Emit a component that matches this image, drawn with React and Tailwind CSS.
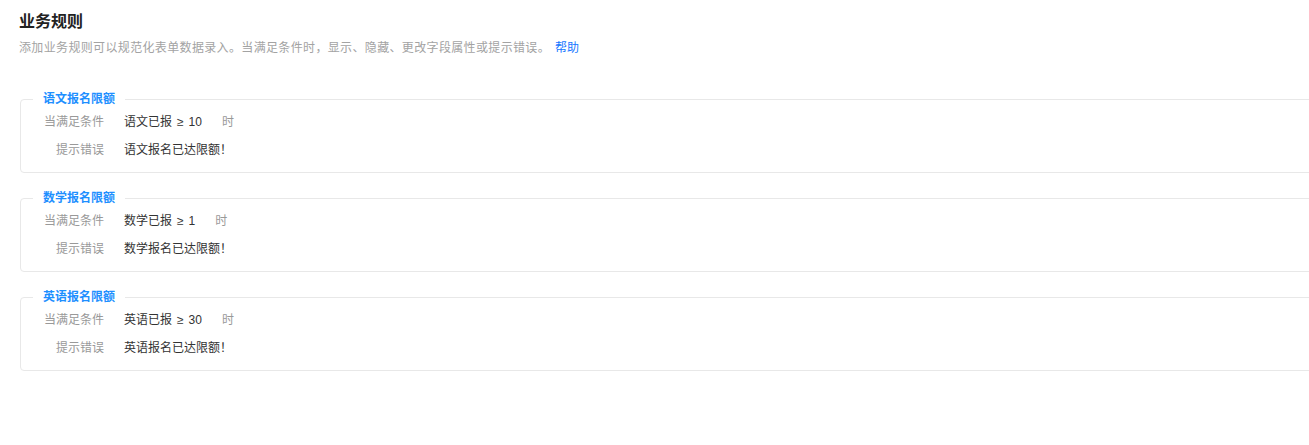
import React from 'react';

const rules = [
    { name: '语文报名限额', field: '语文已报', value: '10', error: '语文报名已达限额！' },
    { name: '数学报名限额', field: '数学已报', value: '1', error: '数学报名已达限额！' },
    { name: '英语报名限额', field: '英语已报', value: '30', error: '英语报名已达限额！' },
];

const RuleCard = ({ rule }) => (
    <fieldset className="mt-[17px] first:mt-0 w-[1320px] border border-[#e8e8e8] rounded-[4px] pl-[12px] pr-[12px] pt-[5px] pb-[12px]">
        <legend className="px-[10px] text-[12px] leading-[16px] font-bold text-[#1e8fff]">{rule.name}</legend>
        <div className="flex items-center h-[20px]">
            <span className="w-[71px] text-right text-[#999]">当满足条件</span>
            <span className="ml-[20px] text-[#333]">
                {rule.field}
                <span className="mx-[5px]">≥</span>
                {rule.value}
            </span>
            <span className="ml-[20px] text-[#999]">时</span>
        </div>
        <div className="flex items-center h-[20px] mt-[8px]">
            <span className="w-[71px] text-right text-[#999]">提示错误</span>
            <span className="ml-[20px] text-[#333]">{rule.error}</span>
        </div>
    </fieldset>
);

export default function App() {
    return (
        <div className="min-h-screen bg-white overflow-hidden text-[12px] font-['Liberation_Sans','Noto_Sans_CJK_SC',sans-serif]">
            {/* Header */}
            <div className="pt-[10px] px-[19px]">
                <h1 className="text-[16px] leading-[24px] font-bold text-[#222]">业务规则</h1>
                <p className="mt-[4px] leading-[20px] text-[#a3a3a3] flex">
                    <span className="tracking-[0.35px]">添加业务规则可以规范化表单数据录入。当满足条件时，显示、隐藏、更改字段属性或提示错误。</span>
                    <a className="ml-[5px] text-[#1677ff]">帮助</a>
                </p>
            </div>

            {/* Rules */}
            <div className="mt-[33px] pl-[20px] flex flex-col">
                {rules.map((r) => (
                    <RuleCard key={r.name} rule={r} />
                ))}
            </div>
        </div>
    );
}
